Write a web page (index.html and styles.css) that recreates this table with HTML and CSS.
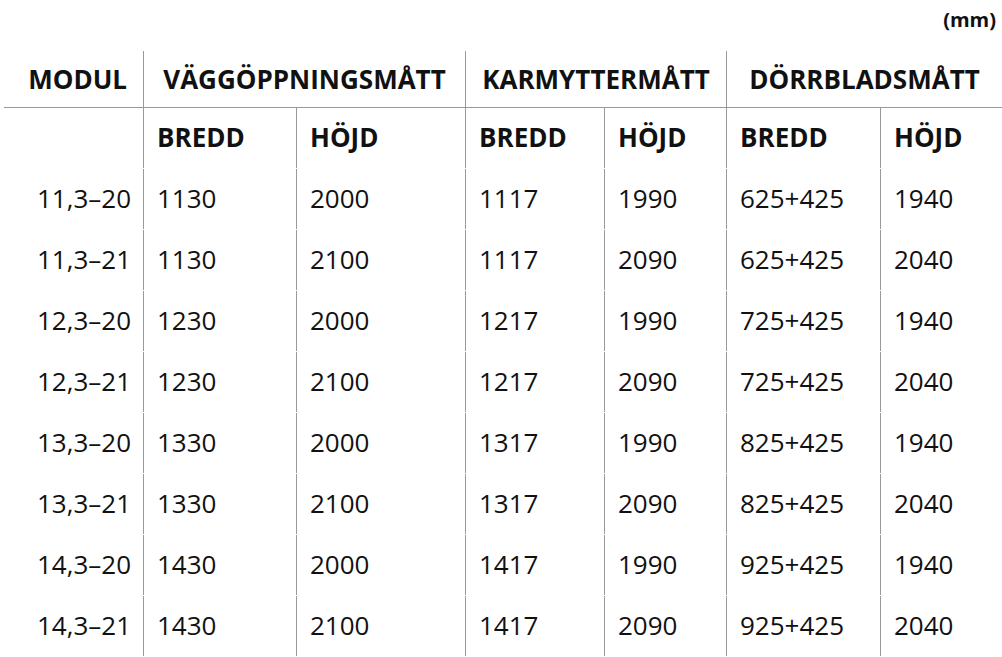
FILE: index.html
```html
<!DOCTYPE html>
<html lang="sv">
<head>
<meta charset="utf-8">
<title>Mått</title>
<link rel="stylesheet" href="styles.css">
</head>
<body>
<div class="page">
  <div class="unit">(mm)</div>
  <div class="grid">
    <div class="h modul">MODUL</div>
    <div class="h group line span2">VÄGGÖPPNINGSMÅTT</div>
    <div class="h group line span2">KARMYTTERMÅTT</div>
    <div class="h group line span2">DÖRRBLADSMÅTT</div>

    <div class="s first"></div>
    <div class="s line">BREDD</div><div class="s line">HÖJD</div>
    <div class="s line">BREDD</div><div class="s line">HÖJD</div>
    <div class="s line">BREDD</div><div class="s line">HÖJD</div>

    <div class="d first">11,3–20</div><div class="d line">1130</div><div class="d line">2000</div><div class="d line">1117</div><div class="d line">1990</div><div class="d line">625+425</div><div class="d line">1940</div>
    <div class="d first">11,3–21</div><div class="d line">1130</div><div class="d line">2100</div><div class="d line">1117</div><div class="d line">2090</div><div class="d line">625+425</div><div class="d line">2040</div>
    <div class="d first">12,3–20</div><div class="d line">1230</div><div class="d line">2000</div><div class="d line">1217</div><div class="d line">1990</div><div class="d line">725+425</div><div class="d line">1940</div>
    <div class="d first">12,3–21</div><div class="d line">1230</div><div class="d line">2100</div><div class="d line">1217</div><div class="d line">2090</div><div class="d line">725+425</div><div class="d line">2040</div>
    <div class="d first">13,3–20</div><div class="d line">1330</div><div class="d line">2000</div><div class="d line">1317</div><div class="d line">1990</div><div class="d line">825+425</div><div class="d line">1940</div>
    <div class="d first">13,3–21</div><div class="d line">1330</div><div class="d line">2100</div><div class="d line">1317</div><div class="d line">2090</div><div class="d line">825+425</div><div class="d line">2040</div>
    <div class="d first">14,3–20</div><div class="d line">1430</div><div class="d line">2000</div><div class="d line">1417</div><div class="d line">1990</div><div class="d line">925+425</div><div class="d line">1940</div>
    <div class="d first">14,3–21</div><div class="d line">1430</div><div class="d line">2100</div><div class="d line">1417</div><div class="d line">2090</div><div class="d line">925+425</div><div class="d line">2040</div>
  </div>
</div>
</body>
</html>
```

FILE: styles.css
```css
html, body {
  margin: 0;
  padding: 0;
  background: #ffffff;
}

body {
  font-family: "Open Sans", "Noto Sans", "Liberation Sans", sans-serif;
  color: #111111;
  width: 1002px;
  overflow: hidden;
}

.page {
  display: flex;
  flex-direction: column;
}

.unit {
  height: 51px;
  font-size: 20px;
  font-weight: 700;
  line-height: 20px;
  padding-top: 10px;
  box-sizing: border-box;
  text-align: right;
  padding-right: 6px;
}

.grid {
  display: grid;
  grid-template-columns: 139px 153px 169px 139px 122px 154px 122px;
  grid-template-rows: 56px;
  grid-auto-rows: 60px;
  row-gap: 1px;
  margin-left: 4px;
  font-size: 26px;
}

.h {
  line-height: 56px;
  box-shadow: 0 1px 0 #999999;
  font-weight: 700;
  white-space: nowrap;
}

.span2 {
  grid-column: span 2;
  text-align: center;
}

.modul {
  text-align: right;
  padding-right: 16px;
}

.s {
  font-weight: 700;
  line-height: 58px;
  padding-bottom: 2px;
  padding-left: 13px;
  white-space: nowrap;
}

.d {
  line-height: 58px;
  padding-bottom: 2px;
  padding-left: 13px;
  white-space: nowrap;
}

.first {
  text-align: right;
  padding-left: 0;
  padding-right: 12px;
}

.line {
  border-left: 1px solid #999999;
}
```
